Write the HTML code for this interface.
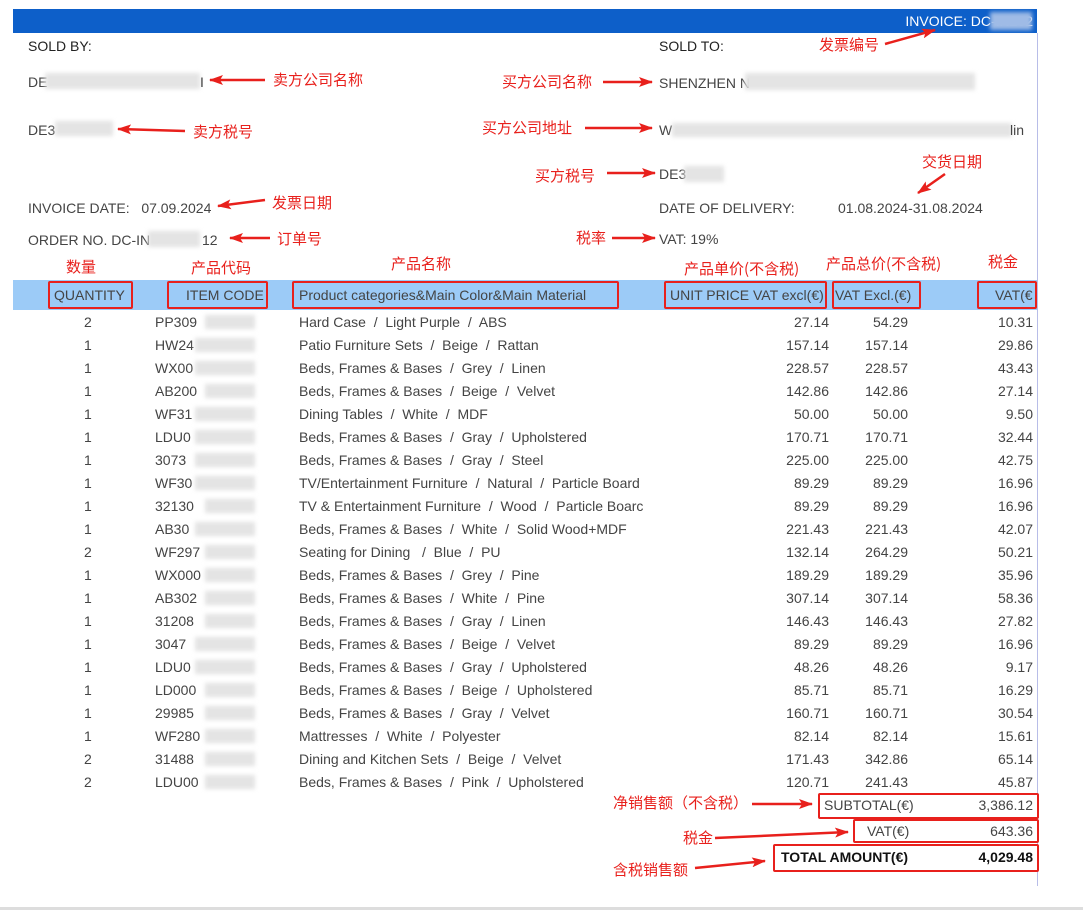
<!DOCTYPE html>
<html><head><meta charset="utf-8"><style>
body{margin:0;width:1083px;height:910px;background:#fff;position:relative;overflow:hidden;font-family:"Liberation Sans","Noto Sans CJK SC",sans-serif;color:#444;font-size:14px}
.a{position:absolute;white-space:nowrap;line-height:16px}
.r{color:#e8201c;font-size:15px;font-family:"Noto Sans CJK SC",sans-serif}
.bx{position:absolute;border:2.5px solid #e8201c;border-radius:2px;box-sizing:border-box}
.bl{position:absolute;background:#e4e4e4;filter:blur(2px)}
.n{position:absolute;text-align:right;width:80px;white-space:nowrap}
</style></head><body>
<div style="position:absolute;left:13px;top:9px;width:1024px;height:24px;background:#0d5fc9"></div>
<div class="a" style="right:50px;top:13px;color:#fff;font-size:14px">INVOICE: DC-IN202</div>
<div class="bl" style="left:990px;top:12px;width:42px;height:18px;background:#9fbbe6"></div>
<div style="position:absolute;left:1037px;top:33px;width:1px;height:853px;background:#b8bde8"></div>
<div style="position:absolute;left:0;top:907px;width:1083px;height:3px;background:#ddd"></div>

<div class="a" style="left:28px;top:38px;color:#222">SOLD BY:</div>
<div class="a" style="left:659px;top:38px;color:#222">SOLD TO:</div>
<div class="a" style="left:28px;top:74px">DE</div><div class="bl" style="left:45px;top:73px;width:155px;height:16px"></div><div class="a" style="left:200px;top:74px">I</div>
<div class="a" style="left:28px;top:122px">DE3</div><div class="bl" style="left:55px;top:121px;width:58px;height:15px"></div>
<div class="a" style="left:28px;top:200px">INVOICE DATE:&nbsp;&nbsp; 07.09.2024</div>
<div class="a" style="left:28px;top:232px">ORDER NO. DC-IN</div><div class="bl" style="left:148px;top:231px;width:52px;height:16px"></div><div class="a" style="left:202px;top:232px">12</div>
<div class="a" style="left:659px;top:75px">SHENZHEN N</div><div class="bl" style="left:745px;top:73px;width:230px;height:17px"></div>
<div class="a" style="left:659px;top:122px">W</div><div class="bl" style="left:672px;top:123px;width:340px;height:14px"></div><div class="a" style="left:1010px;top:122px">lin</div>
<div class="a" style="left:659px;top:166px">DE3</div><div class="bl" style="left:684px;top:166px;width:40px;height:16px"></div>
<div class="a" style="left:659px;top:200px">DATE OF DELIVERY:</div>
<div class="a" style="left:838px;top:200px">01.08.2024-31.08.2024</div>
<div class="a" style="left:659px;top:231px">VAT: 19%</div>

<div style="position:absolute;left:13px;top:280px;width:1024px;height:30px;background:#9ccbf7"></div>
<div class="a" style="left:54px;top:287px">QUANTITY</div>
<div class="a" style="left:186px;top:287px">ITEM CODE</div>
<div class="a" style="left:299px;top:287px">Product categories&amp;Main Color&amp;Main Material</div>
<div class="a" style="left:670px;top:287px">UNIT PRICE VAT excl(€)</div>
<div class="a" style="left:835px;top:287px">VAT Excl.(€)</div>
<div class="a" style="left:995px;top:287px">VAT(€</div>

<div id="rows"></div>

<div class="a" style="left:824px;top:797px">SUBTOTAL(€)</div><div class="n" style="left:953px;top:797px">3,386.12</div>
<div class="a" style="left:867px;top:823px">VAT(€)</div><div class="n" style="left:953px;top:823px">643.36</div>
<div class="a" style="left:781px;top:849px;color:#111;font-weight:bold">TOTAL AMOUNT(€)</div><div class="n" style="left:953px;top:849px;color:#111;font-weight:bold">4,029.48</div>

<div class="bx" style="left:48px;top:281px;width:85px;height:28px"></div>
<div class="bx" style="left:167px;top:281px;width:101px;height:28px"></div>
<div class="bx" style="left:292px;top:281px;width:327px;height:28px"></div>
<div class="bx" style="left:664px;top:281px;width:163px;height:28px"></div>
<div class="bx" style="left:832px;top:281px;width:89px;height:28px"></div>
<div class="bx" style="left:977px;top:281px;width:60px;height:28px"></div>
<div class="bx" style="left:818px;top:793px;width:221px;height:26px"></div>
<div class="bx" style="left:853px;top:819px;width:186px;height:24px"></div>
<div class="bx" style="left:773px;top:844px;width:266px;height:28px"></div>

<div class="a r" style="left:819px;top:37px">发票编号</div>
<div class="a r" style="left:273px;top:72px">卖方公司名称</div>
<div class="a r" style="left:193px;top:124px">卖方税号</div>
<div class="a r" style="left:502px;top:74px">买方公司名称</div>
<div class="a r" style="left:482px;top:120px">买方公司地址</div>
<div class="a r" style="left:535px;top:168px">买方税号</div>
<div class="a r" style="left:922px;top:154px">交货日期</div>
<div class="a r" style="left:272px;top:195px">发票日期</div>
<div class="a r" style="left:277px;top:231px">订单号</div>
<div class="a r" style="left:576px;top:230px">税率</div>
<div class="a r" style="left:66px;top:259px">数量</div>
<div class="a r" style="left:191px;top:260px">产品代码</div>
<div class="a r" style="left:391px;top:256px">产品名称</div>
<div class="a r" style="left:684px;top:261px">产品单价(不含税)</div>
<div class="a r" style="left:826px;top:256px">产品总价(不含税)</div>
<div class="a r" style="left:988px;top:254px">税金</div>
<div class="a r" style="left:613px;top:795px">净销售额（不含税）</div>
<div class="a r" style="left:683px;top:830px">税金</div>
<div class="a r" style="left:613px;top:862px">含税销售额</div>

<svg width="1083" height="910" style="position:absolute;left:0;top:0" fill="none" stroke="#e8201c" stroke-width="2.5">
<defs><marker id="m" markerWidth="8" markerHeight="8" refX="7" refY="4" orient="auto" markerUnits="userSpaceOnUse"><path d="M0,0L8,4L0,8Z" fill="#e8201c" stroke="none" transform="scale(1)"/></marker>
<marker id="M" markerWidth="14" markerHeight="10" refX="13" refY="5" orient="auto" markerUnits="userSpaceOnUse"><path d="M0,0L14,5L0,10L3,5Z" fill="#e8201c" stroke="none"/></marker></defs>
<path d="M885,44L935,30" marker-end="url(#M)"/>
<path d="M265,80L210,80" marker-end="url(#M)"/>
<path d="M185,131L118,129" marker-end="url(#M)"/>
<path d="M603,82L652,82" marker-end="url(#M)"/>
<path d="M585,128L652,128" marker-end="url(#M)"/>
<path d="M607,173L655,173" marker-end="url(#M)"/>
<path d="M945,174L918,193" marker-end="url(#M)"/>
<path d="M265,200L218,206" marker-end="url(#M)"/>
<path d="M270,238L230,238" marker-end="url(#M)"/>
<path d="M612,238L655,238" marker-end="url(#M)"/>
<path d="M752,804L812,804" marker-end="url(#M)"/>
<path d="M715,838L848,832" marker-end="url(#M)"/>
<path d="M695,868L765,861" marker-end="url(#M)"/>
</svg>
<script>
var d=[["2","PP309","Hard Case  /  Light Purple  /  ABS","27.14","54.29","10.31"],
["1","HW24","Patio Furniture Sets  /  Beige  /  Rattan","157.14","157.14","29.86"],
["1","WX00","Beds, Frames &amp; Bases  /  Grey  /  Linen","228.57","228.57","43.43"],
["1","AB200","Beds, Frames &amp; Bases  /  Beige  /  Velvet","142.86","142.86","27.14"],
["1","WF31","Dining Tables  /  White  /  MDF","50.00","50.00","9.50"],
["1","LDU0","Beds, Frames &amp; Bases  /  Gray  /  Upholstered","170.71","170.71","32.44"],
["1","3073","Beds, Frames &amp; Bases  /  Gray  /  Steel","225.00","225.00","42.75"],
["1","WF30","TV/Entertainment Furniture  /  Natural  /  Particle Board","89.29","89.29","16.96"],
["1","32130","TV &amp; Entertainment Furniture  /  Wood  /  Particle Boarc","89.29","89.29","16.96"],
["1","AB30","Beds, Frames &amp; Bases  /  White  /  Solid Wood+MDF","221.43","221.43","42.07"],
["2","WF297","Seating for Dining   /  Blue  /  PU","132.14","264.29","50.21"],
["1","WX000","Beds, Frames &amp; Bases  /  Grey  /  Pine","189.29","189.29","35.96"],
["1","AB302","Beds, Frames &amp; Bases  /  White  /  Pine","307.14","307.14","58.36"],
["1","31208","Beds, Frames &amp; Bases  /  Gray  /  Linen","146.43","146.43","27.82"],
["1","3047","Beds, Frames &amp; Bases  /  Beige  /  Velvet","89.29","89.29","16.96"],
["1","LDU0","Beds, Frames &amp; Bases  /  Gray  /  Upholstered","48.26","48.26","9.17"],
["1","LD000","Beds, Frames &amp; Bases  /  Beige  /  Upholstered","85.71","85.71","16.29"],
["1","29985","Beds, Frames &amp; Bases  /  Gray  /  Velvet","160.71","160.71","30.54"],
["1","WF280","Mattresses  /  White  /  Polyester","82.14","82.14","15.61"],
["2","31488","Dining and Kitchen Sets  /  Beige  /  Velvet","171.43","342.86","65.14"],
["2","LDU00","Beds, Frames &amp; Bases  /  Pink  /  Upholstered","120.71","241.43","45.87"]];
var h="";d.forEach(function(r,i){var y=314+i*23;
h+='<div class="a" style="left:84px;top:'+y+'px">'+r[0]+'</div>';
h+='<div class="a" style="left:155px;top:'+y+'px">'+r[1]+'</div>';
h+='<div class="bl" style="left:'+(155+r[1].length*10)+'px;top:'+(y+1)+'px;width:'+(100-r[1].length*10)+'px;height:14px"></div>';
h+='<div class="a" style="left:299px;top:'+y+'px;white-space:pre;width:358px;overflow:hidden">'+r[2]+'</div>';
h+='<div class="n" style="left:749px;top:'+y+'px">'+r[3]+'</div>';
h+='<div class="n" style="left:828px;top:'+y+'px">'+r[4]+'</div>';
h+='<div class="n" style="left:953px;top:'+y+'px">'+r[5]+'</div>';});
document.getElementById("rows").innerHTML=h;
</script>
</body></html>
